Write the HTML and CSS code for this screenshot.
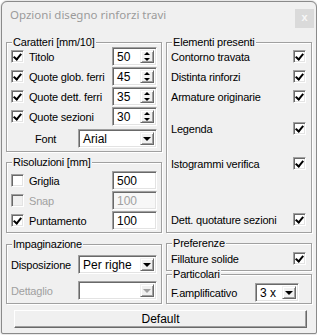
FILE: index.html
```html
<!DOCTYPE html>
<html lang="it">
<head>
    <meta charset="UTF-8">
    <title>Opzioni disegno rinforzi travi</title>
    <link rel="stylesheet" href="styles.css">
</head>
<body>

    <div class="window">
        <div class="titlebar">
            <span class="title">Opzioni disegno rinforzi travi</span>
            <span class="close">x</span>
        </div>

        <div class="client">
            <div class="col">
                <fieldset class="group caratteri">
                    <legend>Caratteri [mm/10]</legend>
                    <div class="row"><span class="check on"></span><span class="lbl">Titolo</span><span class="spin"><span class="val">50</span><span class="arrows"><span class="up"></span><span class="down"></span></span></span></div>
                    <div class="row"><span class="check on"></span><span class="lbl">Quote glob. ferri</span><span class="spin"><span class="val">45</span><span class="arrows"><span class="up"></span><span class="down"></span></span></span></div>
                    <div class="row"><span class="check on"></span><span class="lbl">Quote dett. ferri</span><span class="spin"><span class="val">35</span><span class="arrows"><span class="up"></span><span class="down"></span></span></span></div>
                    <div class="row"><span class="check on"></span><span class="lbl">Quote sezioni</span><span class="spin"><span class="val">30</span><span class="arrows"><span class="up"></span><span class="down"></span></span></span></div>
                    <div class="row font-row"><span class="lbl">Font</span><span class="combo"><span class="val">Arial</span><span class="drop"></span></span></div>
                </fieldset>

                <fieldset class="group risoluzioni">
                    <legend>Risoluzioni [mm]</legend>
                    <div class="row"><span class="check"></span><span class="lbl">Griglia</span><span class="edit">500</span></div>
                    <div class="row disabled"><span class="check"></span><span class="lbl">Snap</span><span class="edit">100</span></div>
                    <div class="row"><span class="check on"></span><span class="lbl">Puntamento</span><span class="edit">100</span></div>
                </fieldset>

                <fieldset class="group impaginazione">
                    <legend>Impaginazione</legend>
                    <div class="row"><span class="lbl">Disposizione</span><span class="combo"><span class="val">Per righe</span><span class="drop"></span></span></div>
                    <div class="row disabled"><span class="lbl">Dettaglio</span><span class="combo"><span class="val"></span><span class="drop"></span></span></div>
                </fieldset>
            </div>

            <div class="col">
                <fieldset class="group elementi">
                    <legend>Elementi presenti</legend>
                    <div class="row"><span class="lbl">Contorno travata</span><span class="check on"></span></div>
                    <div class="row"><span class="lbl">Distinta rinforzi</span><span class="check on"></span></div>
                    <div class="row"><span class="lbl">Armature originarie</span><span class="check on"></span></div>
                    <div class="row legenda"><span class="lbl">Legenda</span><span class="check on"></span></div>
                    <div class="row istogrammi"><span class="lbl">Istogrammi verifica</span><span class="check on"></span></div>
                    <div class="row dett"><span class="lbl">Dett. quotature sezioni</span><span class="check on"></span></div>
                </fieldset>

                <fieldset class="group preferenze">
                    <legend>Preferenze</legend>
                    <div class="row"><span class="lbl">Fillature solide</span><span class="check on"></span></div>
                </fieldset>

                <fieldset class="group particolari">
                    <legend>Particolari</legend>
                    <div class="row"><span class="lbl">F.amplificativo</span><span class="combo small"><span class="val">3 x</span><span class="drop"></span></span></div>
                </fieldset>
            </div>

            <button class="default-btn">Default</button>
        </div>
    </div>

</body>
</html>
```

FILE: styles.css
```css
* {
    box-sizing: border-box;
}

body {
    margin: 0;
    padding: 1px;
    background: #fff;
    font-family: 'Liberation Sans', Arial, sans-serif;
    font-size: 11px;
    letter-spacing: -0.2px;
    color: #000;
}

.window {
    width: 316px;
    height: 333px;
    background: #f0f0f0;
    border: 1px solid #8a8a8a;
    border-radius: 6px 6px 2px 2px;
    box-shadow: 0 0 2px rgba(0, 0, 0, 0.35);
}

/* title bar */
.titlebar {
    height: 29px;
    display: flex;
    justify-content: space-between;
    align-items: flex-start;
    padding: 0 2px 0 8px;
}

.title {
    font-family: 'Noto Sans', sans-serif;
    font-size: 11.5px;
    letter-spacing: 0;
    line-height: 16px;
    margin-top: 5px;
    color: #9b9b9b;
}

.close {
    width: 19px;
    height: 19px;
    margin-top: 7px;
    background: #dadada;
    color: #f7f7f7;
    text-align: center;
    font-weight: bold;
    line-height: 17px;
}

/* client area */
.client {
    display: grid;
    grid-template-columns: 156px 146px;
    column-gap: 4px;
    padding: 6px 4px 0 4px;
}

.col {
    display: flex;
    flex-direction: column;
}

.group {
    margin: 0;
    padding: 0 4px;
    border: 1px solid #a0a0a0;
    box-shadow: 1px 1px 0 #fff, inset 1px 1px 0 #fff;
    min-width: 0;
}

.group legend {
    margin-left: 1px;
    padding: 0 1px;
    height: 10px;
    line-height: 10px;
    background: #f0f0f0;
}

.row {
    display: flex;
    align-items: center;
    height: 19px;
    margin-top: 1px;
}

.row:first-of-type {
    margin-top: 0;
}

.lbl {
    white-space: nowrap;
}

.disabled .lbl {
    color: #a0a0a0;
}

/* checkbox */
.check {
    width: 13px;
    height: 13px;
    flex: none;
    background: #fff;
    border: 1px solid;
    border-color: #a0a0a0 #fff #fff #a0a0a0;
    box-shadow: inset 1px 1px 0 #696969, inset -1px -1px 0 #e3e3e3;
    position: relative;
}

.check.on::after {
    content: '';
    position: absolute;
    left: 3px;
    top: 1px;
    width: 3px;
    height: 6px;
    border: solid #000;
    border-width: 0 2px 2px 0;
    transform: rotate(40deg);
}

.disabled .check {
    background: #f0f0f0;
}

/* edit, spin and combo boxes */
.spin,
.edit,
.combo {
    margin-left: auto;
    height: 19px;
    display: flex;
    align-items: center;
    background: #fff;
    border: 1px solid;
    border-color: #a0a0a0 #fff #fff #a0a0a0;
    box-shadow: inset 1px 1px 0 #696969, inset -1px -1px 0 #e3e3e3;
    padding: 2px;
    letter-spacing: 0;
}

.spin,
.edit {
    width: 45px;
}

.combo {
    width: 79px;
}

.combo.small {
    width: 44px;
    margin-right: 8px;
}

.val {
    flex: 1;
    padding-left: 2px;
    font-size: 12px;
}

.edit {
    padding-left: 4px;
    font-size: 12px;
}

.disabled .edit {
    color: #a0a0a0;
    background: #f7f7f7;
}

.arrows,
.drop {
    align-self: stretch;
    width: 14px;
    display: flex;
    flex-direction: column;
    align-items: center;
    justify-content: center;
    background: #f0f0f0;
    border: 1px solid;
    border-color: #f0f0f0 #696969 #696969 #f0f0f0;
    box-shadow: inset 1px 1px 0 #fff, inset -1px -1px 0 #a0a0a0;
}

.arrows {
    justify-content: space-around;
    gap: 2px;
}

.up,
.down,
.drop::after {
    width: 0;
    height: 0;
    border-left: 3px solid transparent;
    border-right: 3px solid transparent;
}

.up {
    border-bottom: 3px solid #000;
}

.down,
.drop::after {
    border-top: 3px solid #000;
}

.drop::after {
    content: '';
    border-left-width: 4px;
    border-right-width: 4px;
    border-top-width: 4px;
}

.disabled .drop::after {
    border-top-color: #a0a0a0;
}

/* group specific spacing */
.caratteri {
    height: 115px;
}

.font-row {
    margin-top: 3px;
}

.font-row .lbl {
    margin-left: 24px;
}

.caratteri .check,
.risoluzioni .check {
    margin-right: 5px;
}

.risoluzioni {
    margin-top: 5px;
    height: 76px;
    padding-top: 4px;
}

.impaginazione {
    margin-top: 6px;
    height: 65px;
    padding-top: 6px;
}

.impaginazione .row + .row {
    margin-top: 7px;
}

.elementi {
    height: 196px;
}

.elementi .check,
.preferenze .check {
    margin-left: auto;
    margin-right: 1px;
}

.legenda {
    margin-top: 13px;
}

.istogrammi {
    margin-top: 16px;
}

.dett {
    margin-top: 37px;
}

.preferenze {
    margin-top: 5px;
    height: 33px;
    padding-top: 1px;
}

.particolari {
    margin-top: -2px;
    height: 35px;
    padding-top: 4px;
}

.default-btn {
    grid-column: 1 / 3;
    margin: 6px 5px 0 8px;
    height: 18px;
    padding: 0;
    font-family: inherit;
    font-size: 12px;
    letter-spacing: 0;
    background: #f0f0f0;
    border: 1px solid;
    border-color: #fff #696969 #696969 #fff;
    box-shadow: inset -1px -1px 0 #a0a0a0;
    color: #000;
}
```
